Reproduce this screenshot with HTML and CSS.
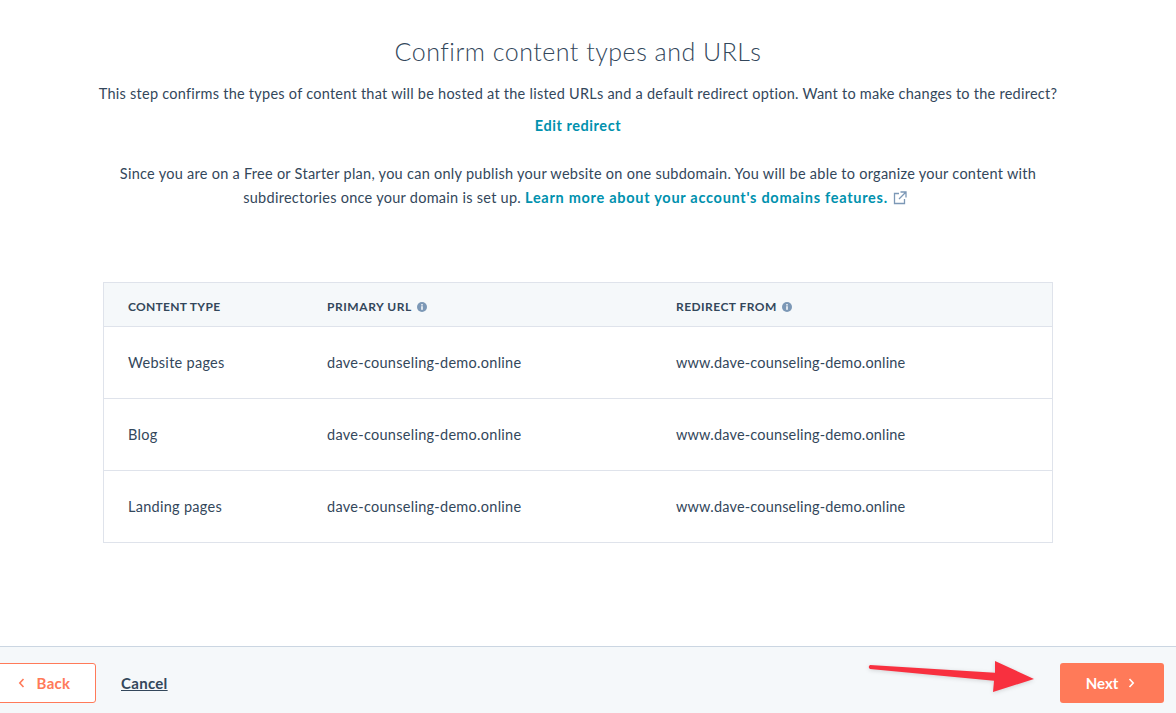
FILE: index.html
```html
<!DOCTYPE html>
<html lang="en">
<head>
<meta charset="utf-8">
<title>Confirm content types and URLs</title>
<link rel="stylesheet" href="styles.css">
</head>
<body>
<div class="page">
  <main class="content">
    <h1 class="title">Confirm content types and URLs</h1>
    <p class="intro">This step confirms the types of content that will be hosted at the listed URLs and a default redirect option. Want to make changes to the redirect?</p>
    <p class="edit"><a class="link" href="#">Edit redirect</a></p>
    <p class="plan">Since you are on a Free or Starter plan, you can only publish your website on one subdomain. You will be able to organize your content with<br>subdirectories once your domain is set up. <a class="link long" href="#">Learn more about your account's domains features.</a>
      <svg class="ext" width="14" height="14" viewBox="0 0 14 14" fill="none" stroke="#7c98b6" stroke-width="1.3"><path d="M6 2.500H1.500v10h10V8"/><path d="M7.500 1h5.500v5.500M13 1 6 8"/></svg>
    </p>
    <div class="table">
      <div class="row head">
        <div class="cell c1">CONTENT TYPE</div>
        <div class="cell c2">PRIMARY URL <svg class="info" width="10" height="10" viewBox="0 0 10 10"><circle cx="5" cy="5" r="5" fill="#7c98b6"/><rect x="4.200" y="4.200" width="1.600" height="3.600" fill="#f5f8fa"/><rect x="4.200" y="2.100" width="1.600" height="1.400" fill="#f5f8fa"/></svg></div>
        <div class="cell c3">REDIRECT FROM <svg class="info" width="10" height="10" viewBox="0 0 10 10"><circle cx="5" cy="5" r="5" fill="#7c98b6"/><rect x="4.200" y="4.200" width="1.600" height="3.600" fill="#f5f8fa"/><rect x="4.200" y="2.100" width="1.600" height="1.400" fill="#f5f8fa"/></svg></div>
      </div>
      <div class="row">
        <div class="cell c1">Website pages</div>
        <div class="cell c2">dave-counseling-demo.online</div>
        <div class="cell c3">www.dave-counseling-demo.online</div>
      </div>
      <div class="row">
        <div class="cell c1">Blog</div>
        <div class="cell c2">dave-counseling-demo.online</div>
        <div class="cell c3">www.dave-counseling-demo.online</div>
      </div>
      <div class="row">
        <div class="cell c1">Landing pages</div>
        <div class="cell c2">dave-counseling-demo.online</div>
        <div class="cell c3">www.dave-counseling-demo.online</div>
      </div>
    </div>
  </main>
  <footer class="footer">
    <a class="btn back" href="#"><svg width="8" height="10" viewBox="0 0 8 10" fill="none" stroke="#ff7a59" stroke-width="1.6"><path d="M5.500 1 1.800 5l3.700 4"/></svg><span>Back</span></a>
    <a class="cancel" href="#">Cancel</a>
    <a class="btn next" href="#"><span>Next</span><svg width="8" height="10" viewBox="0 0 8 10" fill="none" stroke="#fff" stroke-width="1.6"><path d="M2.500 1 6.200 5 2.500 9"/></svg></a>
  </footer>
  <svg class="arrow" width="176" height="44" viewBox="0 0 176 44"><path d="M6 7 131 14.700 131 3 170 21 129 34 130 22.700 6 11Q3.500 9 6 7Z" fill="#f8303f"/></svg>
</div>
</body>
</html>
```
FILE: styles.css
```css
* { box-sizing: border-box; }
html, body { margin: 0; height: 100%; overflow: hidden; }
body { background: #fff; color: #33475b; font-family: Lato, "Open Sans", sans-serif; font-size: 14.5px; }
.page { position: relative; display: flex; flex-direction: column; height: 713px; }
.content { flex: 1; display: flex; flex-direction: column; align-items: center; padding-right: 20px; }
.title { margin: 36px 0 0; font-size: 25px; font-weight: 300; line-height: 31px; letter-spacing: .5px; }
.intro { margin: 15px 0 0; line-height: 24px; letter-spacing: .25px; text-align: center; white-space: nowrap; }
.edit { margin: 8px 0 0; line-height: 24px; text-align: center; }
.plan { margin: 24px 0 0; line-height: 24px; letter-spacing: .27px; text-align: center; white-space: nowrap; }
.link { color: #0091ae; font-weight: 700; text-decoration: none; letter-spacing: .56px; }
.link.long { letter-spacing: .72px; }
.ext { vertical-align: -2px; margin: 0 6px 0 1px; }
.table { width: 950px; margin-top: 72px; border: 1px solid #dfe3eb; }
.row { display: flex; height: 72px; align-items: center; border-top: 1px solid #dfe3eb; letter-spacing: .28px; }
.row .c3 { letter-spacing: .17px; }
.row.head { height: 43px; padding-top: 3px; border-top: 0; background: #f5f8fa; font-size: 12px; font-weight: 700; letter-spacing: .45px; }
.row.head .c1 { letter-spacing: .3px; }
.row.head .c2 { letter-spacing: .55px; }
.row.head .c3 { letter-spacing: .45px; }
.cell { padding-left: 24px; }
.c1 { width: 199px; }
.c2 { width: 349px; }
.c3 { flex: 1; }
.info { vertical-align: -1px; margin-left: 2px; }
.footer { height: 67px; display: flex; align-items: center; padding: 6px 12px 0 0; background: #f5f8fa; border-top: 1px solid #cbd6e2; }
.btn { display: flex; align-items: center; justify-content: center; height: 40px; border-radius: 3px; font-size: 15px; font-weight: 700; letter-spacing: .3px; text-decoration: none; }
.back { width: 104px; margin-left: -8px; gap: 11px; color: #ff7a59; background: #fff; border: 1px solid #ff7a59; }
.cancel { margin-left: 25px; color: #33475b; font-size: 15px; font-weight: 700; letter-spacing: .3px; text-decoration: underline; }
.next { width: 104px; margin-left: auto; padding-right: 3px; gap: 9px; color: #fff; background: #ff7a59; letter-spacing: 0; }
.arrow { position: absolute; left: 864px; top: 658px; filter: drop-shadow(0 1px 2px rgba(0, 0, 0, .15)); }
```
